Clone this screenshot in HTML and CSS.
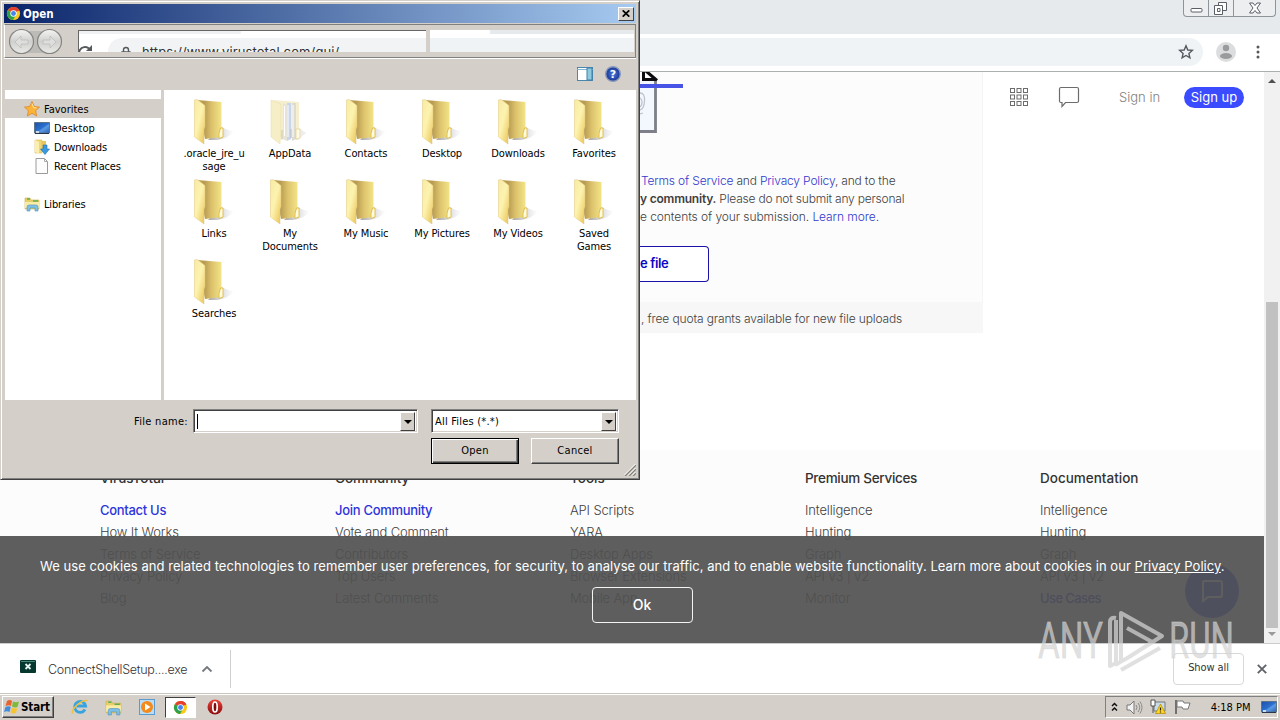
FILE: index.html
```html
<!DOCTYPE html>
<html lang="en">
<head>
<meta charset="utf-8">
<title>Open</title>
<link rel="stylesheet" href="styles.css">
</head>
<body>
<svg class="defs" width="0" height="0">
  <defs>
    <linearGradient id="gf" x1="0" x2="1" y1="0" y2="1"><stop offset="0" stop-color="#f6eba4"/><stop offset=".45" stop-color="#fdf3b0"/><stop offset="1" stop-color="#e9c251"/></linearGradient>
    <linearGradient id="gb" x1="0" x2="1"><stop offset=".3" stop-color="#b99c52"/><stop offset=".6" stop-color="#dcc26c"/><stop offset="1" stop-color="#f3e487"/></linearGradient>
    <linearGradient id="gs" x1="0" x2="1"><stop offset="0" stop-color="#8c8c90" stop-opacity=".8"/><stop offset="1" stop-color="#bbb" stop-opacity="0"/></linearGradient>
    <linearGradient id="gbtn" x1="0" x2="0" y1="0" y2="1"><stop offset="0" stop-color="#f4f4f2"/><stop offset=".5" stop-color="#d0d0ce"/><stop offset="1" stop-color="#e9e9e6"/></linearGradient>
    <linearGradient id="gdesk" x1="0" x2="1" y1="0" y2="1"><stop offset="0" stop-color="#1d4fa8"/><stop offset=".5" stop-color="#2b6fce"/><stop offset=".6" stop-color="#5c9ae4"/><stop offset="1" stop-color="#2962b8"/></linearGradient>
    <radialGradient id="ghelp"><stop offset="0" stop-color="#4b7be0"/><stop offset="1" stop-color="#18358f"/></radialGradient>
    <linearGradient id="gred" x1="0" x2="0" y1="0" y2="1"><stop offset="0" stop-color="#e8453c"/><stop offset="1" stop-color="#8c0b0b"/></linearGradient>
    <symbol id="folder" viewBox="0 0 44 48">
      <path d="M16 42 L30 29 Q36 33 42 33 Q36 41 25 42Z" fill="url(#gs)"/>
      <path d="M5 2 L29.500 4 V39 L13 41Z" fill="url(#gb)"/>
      <path d="M28.500 30 h2.500 v9 l-4 1.500 v-5z" fill="#fffbe0" stroke="#dfb944" stroke-width=".9"/>
      <path d="M2.500 2 Q4 1 6 2 L13 7.500 V29 L12 31 V46 L2.500 39Z" fill="url(#gf)" stroke="#e0c77c" stroke-width=".5"/>
    </symbol>
    <symbol id="appfolder" viewBox="0 0 44 48">
      <path d="M27 42 L31 30 L38 35 L30 42Z" fill="#eee"/>
      <path d="M5 2 L31 4 V39 L13 42Z" fill="#f5efcf"/>
      <path d="M15 5 l4 2 v36 l-4-2z" fill="#e5e3da"/><path d="M19 5h4v36l-4 2z" fill="#c9d5e8"/><path d="M24 5h4v36l-4 2z" fill="#dedbd2"/>
      <path d="M20 7v32M16.500 8v30M25 7v32" stroke="#fff"/><path d="M14 32v9M23 31v9" stroke="#b9b7ae" stroke-width=".8"/>
      <path d="M28 31h4v9l-4 1z" fill="#fffbe8" stroke="#e4cf8c" stroke-width=".7"/>
      <path d="M3 2 L13 6 V30 L12 46 L3 39Z" fill="#f5eec6" stroke="#e9dca4" stroke-width=".5"/>
    </symbol>
    <symbol id="chrome" viewBox="0 0 16 16">
      <circle cx="8" cy="8" r="7" fill="#fbc817"/>
      <path d="M8 8 L1.900 4.500 A7 7 0 0 1 14.100 4.500Z" fill="#e24132"/><path d="M8 1a7 7 0 0 1 6.300 4H8z" fill="#e24132"/>
      <path d="M8 8 L1.900 4.500 A7 7 0 0 0 7.500 15 L10.500 9.500Z" fill="#2da04c"/>
      <circle cx="8" cy="8" r="3.400" fill="#fff"/><circle cx="8" cy="8" r="2.600" fill="#4584ee"/>
    </symbol>
    <symbol id="monitor" viewBox="0 0 16 14">
      <path d="M.5 1.500h15v10.500h-15z" fill="url(#gdesk)" stroke="#5f7388"/><path d="M1 12.500h14" stroke="#27364a"/><path d="M2 10h3v2h-3z" fill="#c8dcec"/>
    </symbol>
    <symbol id="explorer" viewBox="0 0 16 16">
      <path d="M1 2h5l1 2h8v9H1z" fill="#e9cf69" stroke="#cfae4c" stroke-width=".6"/><path d="M3 3h3M9 5h5" stroke="#5eae58" stroke-width="1.500"/><path d="M1 6h14v6H1z" fill="#f8eca6"/>
      <path d="M3 15V11q0-2 2-2h7q2 0 2 2v4h-3v-3H6v3z" fill="#7dbfe6" stroke="#4e94c0" stroke-width=".6"/>
    </symbol>
  </defs>
</svg>
<div class="desktop">
  <div class="browser">
    <div class="tabstrip">
      <div class="winctl">
        <span class="wc"><svg width="24" height="16" viewBox="0 0 24 16"><rect x="7" y="8.500" width="11" height="3.500" rx="1" fill="#fff" stroke="#5b6068"/></svg></span>
        <span class="wc"><svg width="24" height="16" viewBox="0 0 24 16"><path d="M9.500 2.500h8v8h-8z" fill="#fff" stroke="#5b6068"/><path d="M5.500 5.500h8v9h-8z" fill="#fff" stroke="#5b6068"/><path d="M8.500 8.500h2.500v3h-2.500z" fill="none" stroke="#5b6068"/></svg></span>
        <span class="wc wide"><svg width="41" height="16" viewBox="0 0 41 16"><path d="M15.500 3h3.500l2 2.500 2-2.500h3.500l-3.500 5 3.500 5h-3.500l-2-2.500-2 2.500h-3.500l3.500-5z" fill="#fff" stroke="#5b6068"/></svg></span>
      </div>
    </div>
    <div class="toolbar">
      <div class="omnibox"><svg width="16" height="16" viewBox="0 0 16 16"><path d="M8 1.800l1.800 4.200 4.500.4-3.400 3 1 4.400L8 11.500l-3.900 2.300 1-4.400-3.400-3 4.500-.4z" fill="none" stroke="#55595e" stroke-width="1.400"/></svg></div>
      <svg class="avatar" width="20" height="20" viewBox="0 0 20 20"><circle cx="10" cy="10" r="10" fill="#dcddde"/><circle cx="10" cy="6" r="3.200" fill="#999b9d"/><ellipse cx="10" cy="14" rx="6" ry="3" fill="#999b9d"/></svg>
      <svg width="4" height="16" viewBox="0 0 4 16"><g fill="#55595e"><circle cx="2" cy="3" r="1.500"/><circle cx="2" cy="8" r="1.500"/><circle cx="2" cy="13" r="1.500"/></g></svg>
    </div>
    <div class="viewport">
      <div class="page">
        <div class="hero">
          <div class="panel">
            <div class="panel-main">
              <svg class="fileicon" width="43" height="62" viewBox="0 0 43 62"><path d="M0 9h17v51H0z" fill="#f3f7fe"/><path d="M3.500 0v7.500h12M6 -1l11 9.500" fill="none" stroke="#0c0c10" stroke-width="3"/><path d="M15.500 9v50.500H0" fill="none" stroke="#7e7f88" stroke-width="2.800"/><path d="M0 21q5 0 4.500 8T0 38M0 26q3 2 1.500 7L0 35M0 42l3-1" fill="none" stroke="#bfc3cc" stroke-width="1.300"/><path d="M0 14h43" stroke="#4854e6" stroke-width="4"/></svg>
              <p class="terms"><span class="ln t1"><a>Terms of Service</a> and <a>Privacy Policy</a>, and to the</span><span class="ln t2"><b>y community.</b> Please do not submit any personal</span><span class="ln t3">e contents of your submission. <a>Learn more.</a></span></p>
              <div class="choose">e file</div>
            </div>
            <div class="quota">, free quota grants available for new file uploads</div>
          </div>
          <div class="nav">
            <svg width="20" height="20" viewBox="0 0 20 20"><g fill="none" stroke="#6c6c6c"><rect x="1.500" y="1.500" width="4" height="4"/><rect x="8" y="1.500" width="4" height="4"/><rect x="14.500" y="1.500" width="4" height="4"/><rect x="1.500" y="8" width="4" height="4"/><rect x="8" y="8" width="4" height="4"/><rect x="14.500" y="8" width="4" height="4"/><rect x="1.500" y="14.500" width="4" height="4"/><rect x="8" y="14.500" width="4" height="4"/><rect x="14.500" y="14.500" width="4" height="4"/></g></svg>
            <svg class="chat" width="22" height="22" viewBox="0 0 22 22"><path d="M3 1.500h16q1.500 0 1.500 1.500v12q0 1.500-1.500 1.500H7.500L4 20.500V16.500H3q-1.500 0-1.500-1.500V3q0-1.500 1.500-1.500z" fill="none" stroke="#6c6c6c" stroke-width="1.200"/></svg>
            <span class="signin">Sign in</span>
            <span class="signup">Sign up</span>
          </div>
        </div>
        <div class="footer">
          <div class="col"><h4>VirusTotal</h4><a class="hot">Contact Us</a><a>How It Works</a><a>Terms of Service</a><a>Privacy Policy</a><a>Blog</a></div>
          <div class="col"><h4>Community</h4><a class="hot">Join Community</a><a>Vote and Comment</a><a>Contributors</a><a>Top Users</a><a>Latest Comments</a></div>
          <div class="col"><h4>Tools</h4><a>API Scripts</a><a>YARA</a><a>Desktop Apps</a><a>Browser Extensions</a><a>Mobile App</a></div>
          <div class="col"><h4 class="tight">Premium Services</h4><a>Intelligence</a><a>Hunting</a><a>Graph</a><a>API v3 | v2</a><a>Monitor</a></div>
          <div class="col"><h4>Documentation</h4><a>Intelligence</a><a>Hunting</a><a>Graph</a><a>API v3 | v2</a><a class="blue">Use Cases</a></div>
        </div>
        <div class="bubble"><svg width="24" height="24" viewBox="0 0 24 24"><path d="M4 2h16q2 0 2 2v12q0 2-2 2H8l-5 4V4q0-2 1-2z" fill="none" stroke="#fff" stroke-width="2"/></svg></div>
        <div class="cookie"><p>We use cookies and related technologies to remember user preferences, for security, to analyse our traffic, and to enable website functionality. Learn more about cookies in our <u>Privacy Policy</u>.</p><div class="ok">Ok</div></div>
      </div>
      <div class="scroll"><i class="up"></i><div class="thumb"></div><i class="down"></i></div>
    </div>
    <div class="shelf">
      <div class="dl">
        <svg class="exe" width="16" height="13" viewBox="0 0 16 13"><rect width="16" height="13" rx="1" fill="#06382f"/><path d="M1 1.500h14" stroke="#4a8a78"/><path d="M5.500 4l5 5M10.500 4l-5 5" stroke="#e6f4ef" stroke-width="1.800"/></svg>
        <span class="dlname">ConnectShellSetup....exe</span>
        <svg width="12" height="8" viewBox="0 0 12 8"><path d="M1.500 6.500L6 2l4.500 4.500" fill="none" stroke="#75797e" stroke-width="1.800"/></svg>
      </div>
      <div class="showall">Show all</div>
      <svg width="10" height="10" viewBox="0 0 10 10"><path d="M.8.800l8.400 8.400M9.200.800L.8 9.200" stroke="#606469" stroke-width="1.900"/></svg>
    </div>
  </div>
  <div class="taskbar">
    <div class="start"><svg width="16" height="16" viewBox="0 0 16 16"><path d="M3 2q3-2 5 0L7 7Q5 5.500 1.500 7z" fill="#e8632e"/><path d="M9 2.500q3 1.500 6 0L13.500 8Q11 9 8 7.500z" fill="#7cba3a"/><path d="M1.500 8q3-1.500 5.200 0L5.500 13Q3 11.500 0 13z" fill="#3f8ddc"/><path d="M7.700 8.500q3 1.500 5.500.5L12 14q-3 1-5.500-.5z" fill="#f8c430"/></svg><b>Start</b></div>
    <div class="quick">
      <svg width="18" height="18" viewBox="0 0 18 18"><path d="M14 11.500a5.500 5.500 0 1 1 .6-3.500H5.500" fill="none" stroke="#39a3e0" stroke-width="2.800"/><path d="M1.500 15.500Q.5 12 6 7T16.500 2.500" fill="none" stroke="#efc13c" stroke-width="1.600"/></svg>
      <svg width="17" height="17"><use href="#explorer"/></svg>
      <svg width="16" height="16" viewBox="0 0 16 16"><rect x=".5" y=".5" width="15" height="15" fill="#bcdcf3" stroke="#5b9cd0"/><circle cx="8" cy="8" r="6" fill="#f28a1c"/><path d="M6 4.500v7l5.500-3.500z" fill="#fff"/></svg>
      <div class="active"><svg width="15" height="15"><use href="#chrome"/></svg></div>
      <svg width="16" height="16" viewBox="0 0 16 16"><circle cx="8" cy="8" r="7.500" fill="url(#gred)"/><ellipse cx="8" cy="8" rx="2.200" ry="5" fill="#7e0d0d" stroke="#fff" stroke-width="1.700"/></svg>
    </div>
    <div class="tray">
      <svg width="7" height="10" viewBox="0 0 7 10"><path d="M1 4l2.500-2.500L6 4M1 8.500L3.500 6 6 8.500" fill="none" stroke="#111" stroke-width="1.500"/></svg>
      <svg width="17" height="15" viewBox="0 0 17 15"><path d="M1 5h3l4-4v13l-4-4H1z" fill="#f2f2f2" stroke="#777"/><path d="M10 5q2 2.500 0 5M12 3q3.500 4.500 0 9M14 1.500q4 6 0 12" fill="none" stroke="#8a8a8a"/></svg>
      <svg width="16" height="16" viewBox="0 0 16 16"><path d="M4 3h11v9H4z" fill="#c9dbe6" stroke="#777"/><path d="M1 1h4v6H1zM3 7v7" fill="#fff" stroke="#555"/><path d="M10.500 5l5 9.500h-10z" fill="#ffd51e" stroke="#ad8600" stroke-width=".7"/><path d="M10.500 8.500v3M10.500 12.500v1" stroke="#222" stroke-width="1.200"/></svg>
      <svg width="17" height="16" viewBox="0 0 17 16"><path d="M2 1v14" stroke="#666" stroke-width="1.800"/><path d="M3 2h6l1 2h6l-2 6H9l-1-2H3z" fill="#fff" stroke="#777"/></svg>
      <span class="clock">4:18 PM</span>
      <svg class="show" width="16" height="14"><use href="#monitor"/></svg>
    </div>
  </div>

  <div class="dialog">
    <div class="title"><svg width="15" height="15"><use href="#chrome"/></svg><b>Open</b><span class="close"><svg width="8" height="7" viewBox="0 0 8 7"><path d="M.7.300l6.600 6.400M7.300.300L.7 6.700" stroke="#000" stroke-width="1.700"/></svg></span></div>
    <div class="rebar">
      <svg width="55" height="27" viewBox="0 0 55 27"><path d="M13 2h28v22H13z" fill="#bdbbb7"/><g fill="url(#gbtn)" stroke="#848482" stroke-width="1.200"><circle cx="13.500" cy="12.500" r="12"/><circle cx="41.500" cy="12.500" r="12"/></g><path d="M13 7l-6 6 6 6v-4h7v-4h-7zM42 7l6 6-6 6v-4h-7v-4h7z" fill="#dededc" stroke="#bcbcba" stroke-width=".8"/></svg>
      <div class="addr">
        <div class="tabline"></div>
        <div class="addrrow">
        <svg class="reload" width="18" height="18" viewBox="0 0 18 18"><path d="M13 11a6 6 0 1 1-2-5.500" fill="none" stroke="#55595e" stroke-width="2"/><path d="M14 2v6H8z" fill="#55595e"/></svg>
        <div class="addrbox"><svg width="12" height="16" viewBox="0 0 12 16"><path d="M3.500 7V5a2.500 2.500 0 0 1 5 0V7M2 7h8v7H2z" fill="none" stroke="#55595e" stroke-width="1.400"/></svg><span>https://www.virustotal.com/gui/</span></div>
        </div>
      </div>
      <div class="search"><div class="stab"></div><div class="sgray"></div></div>
    </div>
    <div class="cmd">
      <svg width="16" height="14" viewBox="0 0 16 14"><rect x=".5" y=".5" width="15" height="13" fill="#fff" stroke="#4b86ad"/><path d="M0 2.500h16" stroke="#7fb6d4"/><path d="M10 1h5v12h-5z" fill="#8fcae0" stroke="#3f7fa6"/></svg>
      <svg width="16" height="16" viewBox="0 0 16 16"><circle cx="8" cy="8" r="7.300" fill="url(#ghelp)" stroke="#8a98bd" stroke-width="1.400"/><text x="8" y="12" text-anchor="middle" class="q">?</text></svg>
    </div>
    <div class="body">
      <div class="tree">
        <div class="node sel"><svg width="16" height="16" viewBox="0 0 16 16"><path d="M8 .5l2.300 5 5.200.6-3.900 3.600 1.100 5.300L8 12.300 3.300 15l1.100-5.300L.5 6.100l5.200-.6z" fill="#fbb43a" stroke="#df8526" stroke-width=".8"/><path d="M8 2.500l1.500 4 3 .5" fill="none" stroke="#ffe7a0"/></svg><span>Favorites</span></div>
        <div class="node sub"><svg width="16" height="14"><use href="#monitor"/></svg><span>Desktop</span></div>
        <div class="node sub"><svg width="16" height="16" viewBox="0 0 16 16"><path d="M1 1h7v13H1z" fill="#f0d673" stroke="#d8b950" stroke-width=".6"/><path d="M1 1l4 2v12l-4-2z" fill="#fbeeb0"/><path d="M8 2h4v8H8z" fill="#e6c65c"/><path d="M9 6h4v4h2.500L11 15.500 6.500 10H9z" fill="#3a9ae0" stroke="#2270b0" stroke-width=".6"/></svg><span class="snug">Downloads</span></div>
        <div class="node sub"><svg width="16" height="16" viewBox="0 0 16 16"><path d="M2 .5h8.500l3 3v12H2z" fill="#fdfdfd" stroke="#9a9a9a"/><path d="M10.500.500v3h3" fill="none" stroke="#aaa"/></svg><span class="snug">Recent Places</span></div>
        <div class="node lib"><svg width="16" height="16"><use href="#explorer"/></svg><span class="snug">Libraries</span></div>
      </div>
      <div class="files">
        <div class="f"><svg><use href="#folder"/></svg><span>.oracle_jre_u<br>sage</span></div>
        <div class="f"><svg><use href="#appfolder"/></svg><span>AppData</span></div>
        <div class="f"><svg><use href="#folder"/></svg><span>Contacts</span></div>
        <div class="f"><svg><use href="#folder"/></svg><span>Desktop</span></div>
        <div class="f"><svg><use href="#folder"/></svg><span>Downloads</span></div>
        <div class="f"><svg><use href="#folder"/></svg><span>Favorites</span></div>
        <div class="f"><svg><use href="#folder"/></svg><span>Links</span></div>
        <div class="f"><svg><use href="#folder"/></svg><span>My<br>Documents</span></div>
        <div class="f"><svg><use href="#folder"/></svg><span>My Music</span></div>
        <div class="f"><svg><use href="#folder"/></svg><span>My Pictures</span></div>
        <div class="f"><svg><use href="#folder"/></svg><span>My Videos</span></div>
        <div class="f"><svg><use href="#folder"/></svg><span>Saved<br>Games</span></div>
        <div class="f"><svg><use href="#folder"/></svg><span>Searches</span></div>
      </div>
    </div>
    <div class="bottom">
      <div class="row"><label>File name:</label><div class="combo name"><i class="caret"></i><span class="arrow"></span></div><div class="combo type"><span>All Files (*.*)</span><span class="arrow"></span></div></div>
      <div class="row btns"><div class="btn def">Open</div><div class="btn">Cancel</div></div>
      <svg class="grip" width="12" height="12" viewBox="0 0 12 12"><path d="M1 12L12 1M5 12l7-7M9 12l3-3" stroke="#85817b" stroke-width="1.500"/><path d="M0 11.500L11.500 0M4 11.500L11.500 4M8 11.500L11.500 8" stroke="#fff"/></svg>
    </div>
  </div>

  <svg class="mark" width="200" height="66" viewBox="0 0 200 66">
    <g>
      <text x="2" y="50" textLength="65" lengthAdjust="spacingAndGlyphs">ANY</text>
      <text x="133" y="50" textLength="65" lengthAdjust="spacingAndGlyphs">RUN</text>
    </g>
    <path d="M80 10q-6-1-6 4v44l6-3V12M85 53V5l41 23-33 21-14 8M91 20l27 15M85 62l39-22" fill="none" stroke="#d4d4d4" stroke-opacity=".72" stroke-width="4" stroke-linejoin="round"/>
  </svg>
</div>
</body>
</html>
```
FILE: styles.css
```css
* { box-sizing: border-box; }
body { margin: 0; width: 1280px; height: 720px; overflow: hidden; }
svg { display: block; flex: none; }
.defs { position: absolute; }
.desktop { position: relative; width: 1280px; height: 720px; display: flex; flex-direction: column; overflow: hidden; font-family: "DejaVu Sans Condensed", "DejaVu Sans", sans-serif; font-stretch: condensed; font-size: 11px; color: #000; }

.browser { height: 693px; display: flex; flex-direction: column; background: #fff; }
.tabstrip { height: 34px; background: #e7eaed; display: flex; justify-content: flex-end; padding-right: 4px; }
.winctl { display: flex; height: 17px; border: 1px solid #8e949b; border-top: 0; border-radius: 0 0 4px 4px; background: #eceef0; }
.wc { width: 25px; border-right: 1px solid #8e949b; }
.wc.wide { width: 41px; border-right: 0; }
.toolbar { height: 38px; display: flex; align-items: center; padding: 0 18px 2px 0; border-bottom: 1px solid #abb2ae; }
.omnibox { width: 1203px; height: 28px; border-radius: 14px; background: #f0f3f6; display: flex; align-items: center; justify-content: flex-end; padding-right: 9px; }
.avatar { margin: 0 20px 0 13px; }
.viewport { height: 571px; display: flex; }
.page { position: relative; width: 1264px; overflow: hidden; display: flex; flex-direction: column; font-family: Inter, sans-serif; font-size: 13px; color: #3f3f3f; font-weight: 300; }
.hero { height: 378px; display: flex; }
.panel { width: 983px; height: 261px; }
.panel-main { height: 230px; border-right: 1px solid #f5f5f5; background: #fcfcfd; padding-left: 640px; }
.terms { margin: 38px 0 0; line-height: 18px; font-size: 12px; }
.ln { display: block; white-space: nowrap; }
.t1 { letter-spacing: -.17px; padding-left: 1px; }
.t2 { letter-spacing: -.21px; }
.t3 { letter-spacing: -.07px; }
.terms b { font-weight: 600; }
.terms a { color: #3238cc; }
.choose { margin-top: 20px; width: 69px; height: 36px; border: 1px solid #1a12a8; border-left: 0; border-radius: 0 4px 4px 0; background: #fff; color: #0a06c4; font-weight: 600; line-height: 33px; font-size: 13px; letter-spacing: -.4px; }
.quota { height: 31px; background: #f7f7f7; padding-left: 641px; line-height: 33px; font-size: 12px; letter-spacing: -.13px; white-space: nowrap; }
.nav { flex: 1; height: 50px; display: flex; align-items: center; padding-left: 26px; }
.chat { margin-left: 29px; }
.signin { margin-left: 39px; width: 42px; color: #808080; white-space: nowrap; }
.signup { margin-left: 23px; width: 60px; height: 21px; border-radius: 11px; background: #3b4bff; color: #fff; font-weight: 400; line-height: 21px; text-align: center; }
.footer { flex: 1; background: #fcfcfc; padding: 18px 0 0 100px; display: flex; }
.col { width: 235px; display: flex; flex-direction: column; line-height: 22px; letter-spacing: -.15px; white-space: nowrap; }
.col:last-child { width: 164px; }
.col h4 { margin: 0 0 10px; font-size: 13.5px; line-height: 21px; letter-spacing: 0; padding-top: 0; font-weight: 500; color: #333; }
.col h4.tight { letter-spacing: -.3px; }
.col .hot { color: #2c34dc; font-weight: 500; letter-spacing: -.3px; }
.col .blue { color: #2c34dc; font-weight: 500; letter-spacing: -.6px; }
.bubble { position: absolute; left: 1185px; top: 492px; width: 54px; height: 54px; border-radius: 50%; background: #394eff; display: grid; place-items: center; }
.cookie { position: absolute; left: 0; top: 464px; width: 1264px; height: 107px; background: rgba(80,80,80,.92); color: #fff; font-weight: 400; display: flex; flex-direction: column; align-items: center; padding-left: 20px; }
.cookie p { margin: 20px 0 0; align-self: flex-start; margin-left: 20px; line-height: 20px; letter-spacing: .055px; white-space: nowrap; }
.ok { margin-top: 11px; width: 101px; height: 36px; border: 1px solid #f4f4f4; border-radius: 4px; text-align: center; line-height: 33px; font-weight: 500; font-size: 14px; }
.scroll { width: 16px; background: #f1f1f1; display: flex; flex-direction: column; align-items: center; }
.up, .down { width: 0; height: 0; border: 4px solid transparent; }
.up { border-top: 0; border-bottom-color: #505050; margin-top: 7px; }
.thumb { width: 12px; height: 326px; background: #c1c1c1; margin-top: 219px; }
.down { border-bottom: 0; border-top-color: #9a9a9a; margin-top: 4px; }
.shelf { height: 50px; border-top: 1px solid #ccc; display: flex; align-items: center; padding-right: 13px; background: #fff; }
.dl { width: 231px; height: 38px; border-right: 1px solid #cfcfcf; display: flex; align-items: center; padding-left: 20px; }
.exe { margin-bottom: 4px; }
.dlname { margin: 1px 14px 0 12px; width: 139px; font-size: 12.5px; letter-spacing: -.28px; white-space: nowrap; color: #333; font-family: Inter, sans-serif; font-weight: 300; }
.showall { margin: 0 13px 0 auto; width: 71px; height: 32px; border: 1px solid #d6d8da; border-radius: 4px; text-align: center; line-height: 28px; color: #333; letter-spacing: -.1px; }

.taskbar { height: 27px; background: #d4cfc8; border-top: 1px solid #c9c5be; box-shadow: inset 0 1px #fff; display: flex; align-items: center; padding: 0 2px 0; }
.start { width: 52px; height: 22px; border: 1px solid; border-color: #fff #404040 #404040 #fff; box-shadow: inset -1px -1px #808080; display: flex; align-items: center; gap: 1px; font-size: 11.5px; padding-left: 1px; letter-spacing: -.1px; }
.quick { display: flex; align-items: center; margin-left: 17px; gap: 16px; }
.quick .active { width: 31px; height: 21px; background: #fff; border: 1px solid; border-color: #404040 #fff #fff #404040; display: grid; place-items: center; margin: 0 -5px 0 -6px; }
.quick svg:nth-child(2) { margin-right: 1px; }
.tray { margin-left: auto; height: 22px; width: 173px; border: 1px solid; border-color: #808080 #fff #fff #808080; display: flex; align-items: center; padding: 0 0 0 5px; gap: 7.5px; white-space: nowrap; }
.clock { margin-left: auto; margin-right: 3px; }

.dialog { position: absolute; left: 0; top: 0; width: 640px; height: 480px; background: #d4cfc8; border: 1px solid; border-color: #d4cfc8 #404040 #404040 #d4cfc8; box-shadow: inset 1px 1px #fff, inset -1px -1px #808080; padding: 3px; display: flex; flex-direction: column; }
.title { height: 19px; background: linear-gradient(90deg, #0a246a, #a6caf0); display: flex; align-items: center; color: #fff; padding: 0 2px 0 2px; gap: 2px; font-size: 11.5px; }
.close { margin-left: auto; width: 16px; height: 14px; background: #d4cfc8; border: 1px solid; border-color: #fff #404040 #404040 #fff; display: grid; place-items: center; }
.rebar { height: 34px; margin-top: 1px; border: 1px solid #808080; border-left-color: #fff; box-shadow: 0 1px #fff; display: flex; padding: 4px 1px 0 3px; }
.addr { margin: 1px 0 0 15px; width: 348px; height: 22px; border-top: 1px solid #666; border-left: 1px solid #666; background: #fff; overflow: hidden; }
.tabline { width: 162px; height: 3px; background: #f0f1f3; }
.addrrow { display: flex; }
.reload { margin: 9px 0 0 -1px; }
.addrbox { margin: 4px 0 0 12px; width: 330px; height: 28px; border-radius: 14px 0 0 14px; background: #f1f3f4; display: flex; padding: 7px 0 0 12px; gap: 10px; flex: none; }
.addrbox span { font-family: Inter, sans-serif; font-size: 13px; line-height: 14px; letter-spacing: .12px; color: #333; white-space: nowrap; }
.search { margin: 1px 0 0 4px; width: 204px; height: 22px; background: #fff; }
.stab { height: 4px; margin-left: 60px; background: #e7eaed; }
.sgray { height: 14px; margin-top: 4px; background: #f0f3f6; }
.cmd { height: 32px; display: flex; justify-content: flex-end; align-items: center; gap: 12px; padding-right: 15px; }
.q { font: bold 11px "DejaVu Sans", sans-serif; fill: #fff; }
.body { height: 310px; display: flex; background: #fff; }
.tree { width: 160px; border-right: 3px solid #d4cfc8; padding-top: 9px; border-left: 1px solid #d4cfc8; }
.node { height: 19px; display: flex; align-items: center; gap: 4px; padding-left: 19px; }
.node span { padding-top: 2px; }
.snug { letter-spacing: -.15px; }
.node.sel { background: #d4cfc8; }
.node.sub { padding-left: 29px; }
.node.lib { margin-top: 19px; }
.files { flex: 1; display: grid; grid-template-columns: repeat(6, 76px); grid-auto-rows: 80px; padding: 8px 0 0 12px; align-content: start; }
.f { display: flex; flex-direction: column; align-items: center; }
.f svg { width: 44px; height: 48px; }
.f span { line-height: 13px; text-align: center; white-space: nowrap; margin-top: 1px; letter-spacing: -.1px; }
.bottom { flex: 1; position: relative; padding: 9px 17px 0 0; }
.row { display: flex; justify-content: flex-end; align-items: center; }
.row label { margin-right: 5px; letter-spacing: .3px; }
.combo { height: 24px; background: #fff; border: 1px solid; border-color: #808080 #fff #fff #808080; box-shadow: inset 1px 1px #404040, inset -1px -1px #d4cfc8; display: flex; align-items: center; padding: 1px 2px 0 3px; }
.combo.name { width: 225px; margin-right: 13px; }
.combo.type { width: 188px; letter-spacing: .2px; }
.caret { width: 1px; height: 15px; background: #000; }
.arrow { margin-left: auto; width: 15px; height: 19px; background: #d4cfc8; border: 1px solid; border-color: #fff #404040 #404040 #fff; display: grid; place-items: center; }
.arrow::after { content: ""; border: 4px solid transparent; border-top-color: #000; border-bottom: 0; }
.btns { margin-top: 5px; gap: 12px; }
.btn { width: 88px; height: 26px; border: 1px solid; border-color: #fff #404040 #404040 #fff; box-shadow: inset -1px -1px #808080; text-align: center; line-height: 24px; letter-spacing: .3px; }
.btn.def { border-color: #000; box-shadow: inset 1px 1px #fff, inset -1px -1px #404040, inset -2px -2px #808080; }
.grip { position: absolute; right: 0; bottom: 0; }
.mark { position: absolute; left: 1036px; top: 608px; font: 50px Roboto, sans-serif; }
.mark g { fill: #d4d4d4; fill-opacity: .7; stroke: #d4d4d4; stroke-opacity: .5; stroke-width: .8px; }
```
